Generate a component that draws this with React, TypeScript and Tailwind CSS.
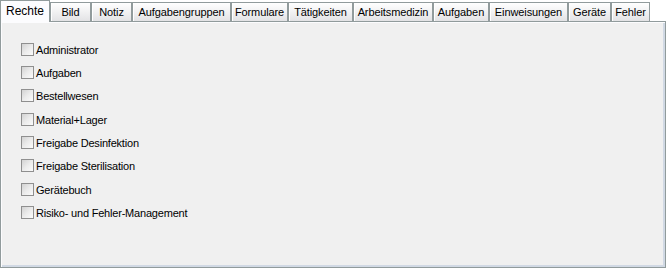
import React from "react";

const tabs = [
  { label: "Rechte", w: "w-[50px]" },
  { label: "Bild", w: "w-[41px]" },
  { label: "Notiz", w: "w-[41px]" },
  { label: "Aufgabengruppen", w: "w-[99px]" },
  { label: "Formulare", w: "w-[57px]" },
  { label: "Tätigkeiten", w: "w-[65px]" },
  { label: "Arbeitsmedizin", w: "w-[80px]" },
  { label: "Aufgaben", w: "w-[56px]" },
  { label: "Einweisungen", w: "w-[79px]" },
  { label: "Geräte", w: "w-[43px]" },
  { label: "Fehler", w: "w-[39px]" },
];

const rights = [
  { label: "Administrator", h: "h-[23px]" },
  { label: "Aufgaben", h: "h-[23px]" },
  { label: "Bestellwesen", h: "h-[24px]" },
  { label: "Material+Lager", h: "h-[23px]" },
  { label: "Freigabe Desinfektion", h: "h-[23px]" },
  { label: "Freigabe Sterilisation", h: "h-[24px]" },
  { label: "Gerätebuch", h: "h-[23px]" },
  { label: "Risiko- und Fehler-Management", h: "h-[23px]" },
];

function Checkbox() {
  return (
    <span className="w-[13px] h-[13px] border border-[#8f8f8f] bg-gradient-to-br from-[#d2d2d2] via-[#ebebeb] to-[#fbfbfb] shrink-0" />
  );
}

export default function App() {
  return (
    <div className="w-[669px] h-[270px] bg-white text-black text-[11px] leading-none font-['Tahoma','Liberation_Sans',sans-serif]">
      <div className="relative z-10 flex items-end h-[22px]">
        {tabs.map((t, i) =>
          i === 0 ? (
            <div
              key={t.label}
              className={`${t.w} h-[22px] flex items-center justify-center pb-[2px] bg-[#fcfcfe] border-t border-l border-r border-[#919b9c] text-[12px]`}
            >
              {t.label}
            </div>
          ) : (
            <div
              key={t.label}
              className={`${t.w} h-[19px] mb-px flex items-center justify-center bg-gradient-to-b from-[#ffffff] to-[#e3e3e5] border-t border-l border-r border-[#919b9c] shadow-[inset_1px_0_0_#ffffff] tracking-[-0.1px]`}
            >
              {t.label}
            </div>
          )
        )}
      </div>
      <div className="-mt-px w-[666px] h-[247px] border border-[#919b9c] bg-[#f0f0f0] shadow-[inset_1px_1px_0_#fcfcfe,inset_-2px_-2px_0_#d1d9e4]">
        <div className="pt-[21px] pl-[20px] flex flex-col">
          {rights.map((r) => (
            <div key={r.label} className={`${r.h} flex items-start gap-[2px]`}>
              <Checkbox />
              <span className="text-[11px] leading-[13px] pt-px tracking-[-0.2px]">{r.label}</span>
            </div>
          ))}
        </div>
      </div>
    </div>
  );
}
